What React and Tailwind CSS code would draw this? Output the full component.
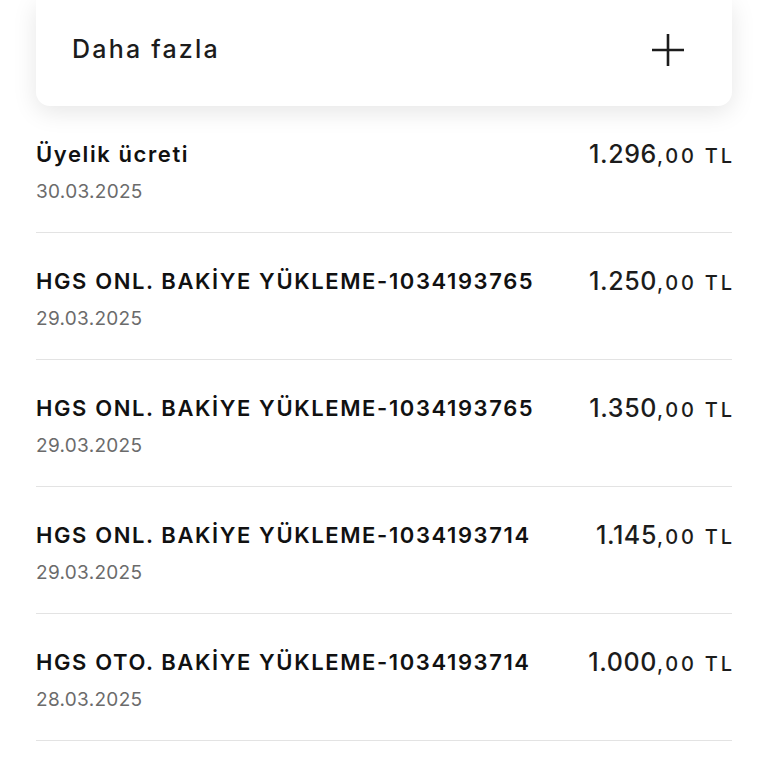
import React from "react";

const rows = [
  { title: "Üyelik ücreti", date: "30.03.2025", int: "1.296", dec: ",00 TL" },
  { title: "HGS ONL. BAKİYE YÜKLEME-1034193765", date: "29.03.2025", int: "1.250", dec: ",00 TL" },
  { title: "HGS ONL. BAKİYE YÜKLEME-1034193765", date: "29.03.2025", int: "1.350", dec: ",00 TL" },
  { title: "HGS ONL. BAKİYE YÜKLEME-1034193714", date: "29.03.2025", int: "1.145", dec: ",00 TL" },
  { title: "HGS OTO. BAKİYE YÜKLEME-1034193714", date: "28.03.2025", int: "1.000", dec: ",00 TL" },
];

export default function App() {
  return (
    <div
      className="w-[768px] h-[768px] bg-white overflow-hidden"
      style={{ fontFamily: "Inter, 'Noto Sans', sans-serif" }}
    >
      <div className="px-[36px]">
        <div className="h-[106px] bg-white rounded-b-[14px] shadow-[0_6px_24px_rgba(0,0,0,0.10)] flex items-center justify-between pl-[36px] pr-[47px] pb-[6px]">
          <span className="text-[25px] font-medium text-[#1c1c1c] tracking-[2.2px]">Daha fazla</span>
          <svg width="34" height="34" viewBox="0 0 34 34" fill="none">
            <path d="M17 1V33M1 17H33" stroke="#1c1c1c" strokeWidth="2.6" />
          </svg>
        </div>
        <div>
          {rows.map((r, i) => (
            <div key={i} className="border-b border-[#e3e3e3] pt-[33px] pb-[26px] flex justify-between">
              <div className="flex flex-col gap-[9px]">
                <div className="text-[22px] leading-[30px] font-semibold text-[#111] tracking-[1.6px]">{r.title}</div>
                <div className="text-[19px] leading-[28px] text-[#6b6b6b] tracking-[0.3px]">{r.date}</div>
              </div>
              <div className="leading-[30px] text-[#1c1c1c] font-medium whitespace-nowrap">
                <span className="text-[25px] tracking-[0.6px]">{r.int}</span>
                <span className="text-[20px] tracking-[2.8px] mr-[-2.8px]">{r.dec}</span>
              </div>
            </div>
          ))}
        </div>
      </div>
    </div>
  );
}
